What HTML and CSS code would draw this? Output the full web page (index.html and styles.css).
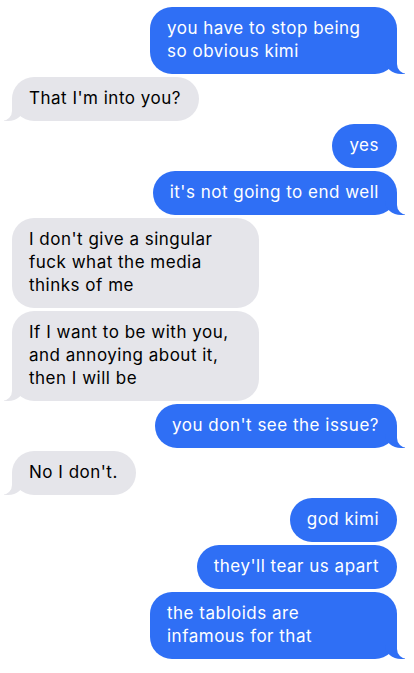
FILE: index.html
```html
<!DOCTYPE html>
<html>
<head>
<meta charset="utf-8">
<link rel="stylesheet" href="styles.css">
</head>
<body>
<div class="chat">
  <div class="msg me tail">you have to stop being so obvious kimi</div>
  <div class="msg them tail">That I'm into you?</div>
  <div class="msg me">yes</div>
  <div class="msg me tail">it's not going to end well</div>
  <div class="msg them">I don't give a singular fuck what the media thinks of me</div>
  <div class="msg them tail">If I want to be with you, and annoying about it, then I will be</div>
  <div class="msg me tail">you don't see the issue?</div>
  <div class="msg them tail">No I don't.</div>
  <div class="msg me">god kimi</div>
  <div class="msg me">they'll tear us apart</div>
  <div class="msg me tail">the tabloids are infamous for that</div>
</div>
</body>
</html>
```
FILE: styles.css
```css
html, body {
  margin: 0;
  padding: 0;
  background: #ffffff;
}
body {
  font-family: Inter, "Noto Sans", sans-serif;
  font-size: 17px;
  line-height: 23px;
  letter-spacing: 0.5px;
}
.chat {
  display: flex;
  flex-direction: column;
  gap: 3px;
  padding: 7px 17px 0 12px;
}
.msg {
  position: relative;
  max-width: 212px;
  padding: 10px 18px 11px 17px;
  border-radius: 22px;
}
.me {
  align-self: flex-end;
  background: #2f6ff5;
  color: #ffffff;
}
.them {
  align-self: flex-start;
  background: #e5e5ea;
  color: #000000;
}
.me.tail::before {
  content: "";
  position: absolute;
  bottom: 0;
  right: -8px;
  width: 20px;
  height: 22px;
  background: #2f6ff5;
  border-bottom-left-radius: 16px 14px;
}
.me.tail::after {
  content: "";
  position: absolute;
  bottom: 0;
  right: -26px;
  width: 26px;
  height: 22px;
  background: #ffffff;
  border-bottom-left-radius: 10px;
}
.them.tail::before {
  content: "";
  position: absolute;
  bottom: 0;
  left: -8px;
  width: 20px;
  height: 22px;
  background: #e5e5ea;
  border-bottom-right-radius: 16px 14px;
}
.them.tail::after {
  content: "";
  position: absolute;
  bottom: 0;
  left: -26px;
  width: 26px;
  height: 22px;
  background: #ffffff;
  border-bottom-right-radius: 10px;
}
```
